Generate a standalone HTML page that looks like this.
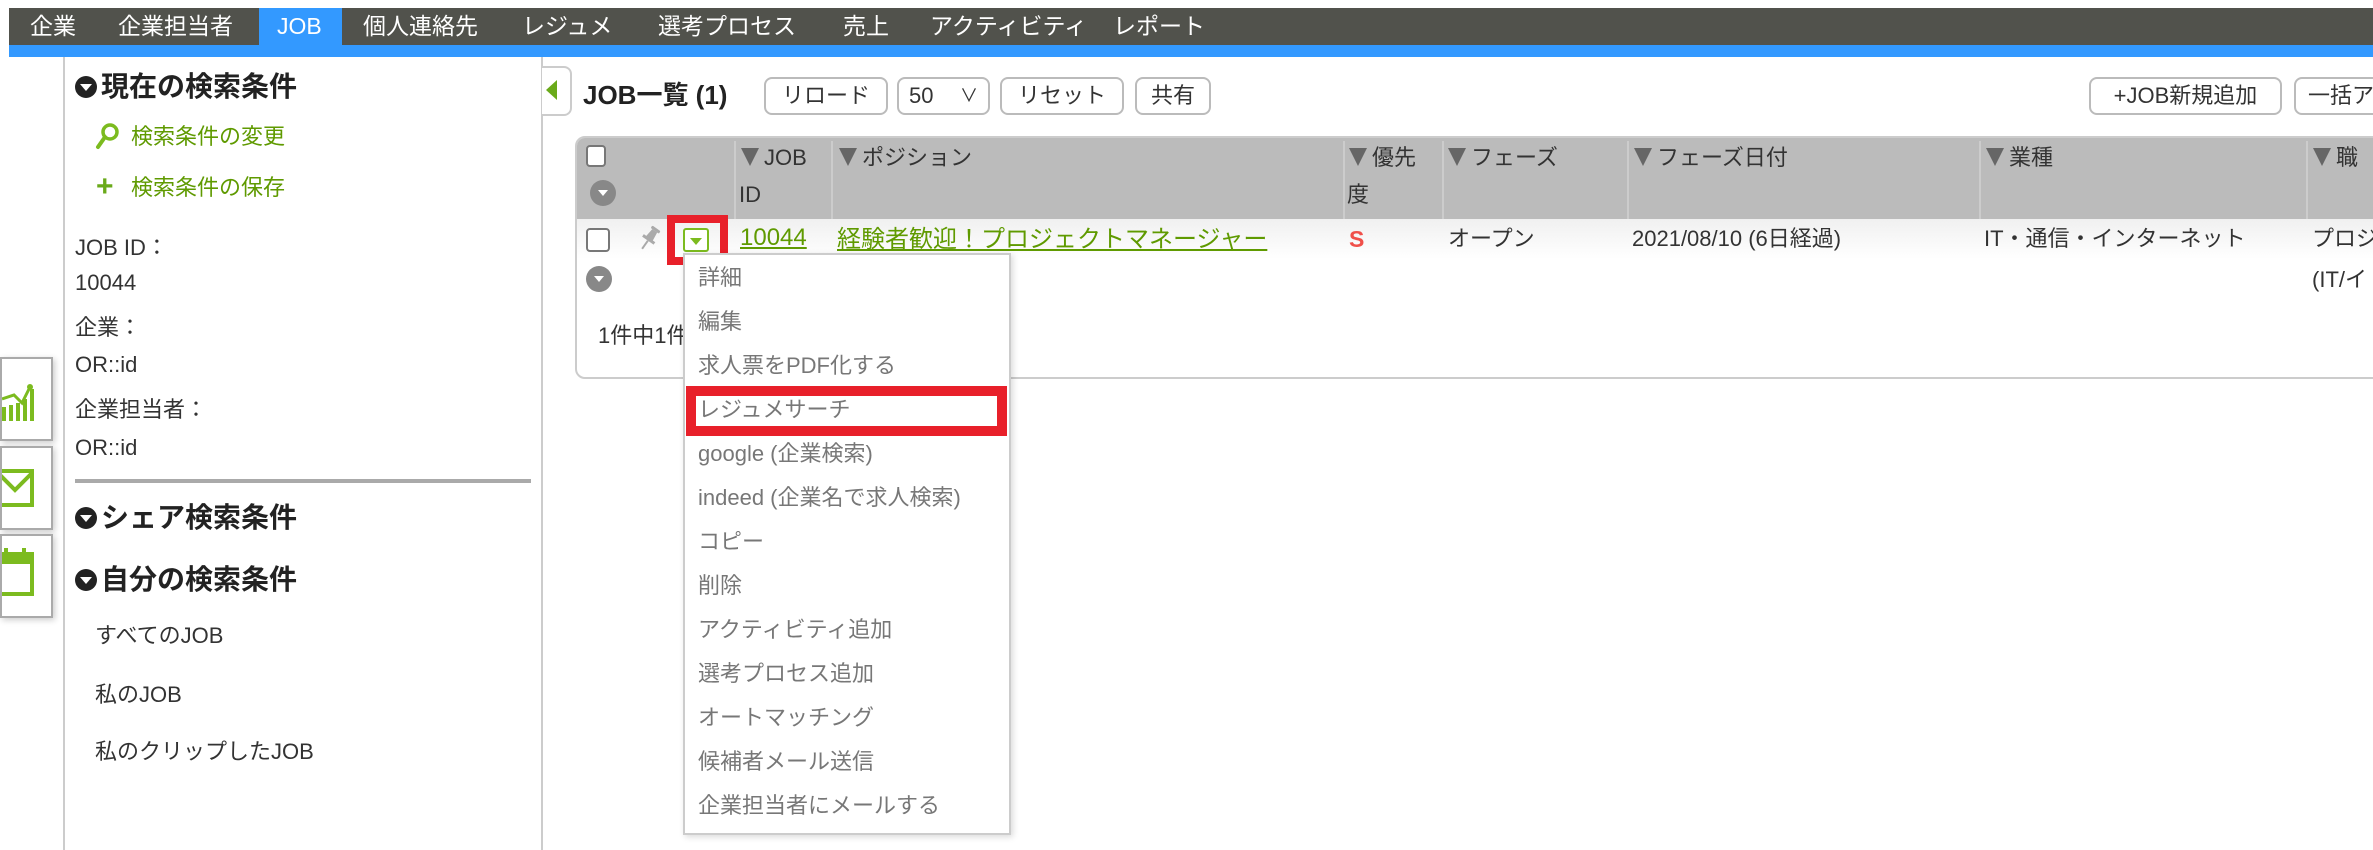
<!DOCTYPE html>
<html><head><meta charset="utf-8"><style>
*{margin:0;padding:0;box-sizing:border-box}
body{width:2373px;height:850px;overflow:hidden;background:#fff;font-family:"Liberation Sans","Noto Sans CJK JP",sans-serif;color:#333;position:relative}
.a{position:absolute;white-space:nowrap;line-height:30px}
.nav{position:absolute;left:9px;top:8px;width:2364px;height:37px;background:#51524c}
.blue{position:absolute;left:9px;top:45px;width:2364px;height:12px;background:#3399ff}
.ni{position:absolute;top:11px;color:#fff;font-size:23px;line-height:30px;white-space:nowrap}
.h{font-weight:bold;font-size:28px;color:#222}
.circ{display:inline-block;width:22px;height:22px;border-radius:50%;background:#222;position:relative;vertical-align:-2px;margin-right:4px}
.circ:after{content:"";position:absolute;left:5px;top:8px;border-left:6px solid transparent;border-right:6px solid transparent;border-top:7px solid #fff}
.g{color:#5f9a00;font-size:22px}
.t{font-size:22px;color:#333}
.btn{position:absolute;top:77px;height:38px;border:2px solid #bbb;border-radius:8px;font-size:22px;line-height:34px;text-align:center;color:#333;background:#fff}
.th{position:absolute;top:138px;height:81px;background:#bbb}
.sep{position:absolute;top:141px;width:2px;height:78px;background:#ccc}
.hd{font-size:22px;color:#333}
.tri{display:inline-block;width:0;height:0;border-left:9px solid transparent;border-right:9px solid transparent;border-top:18px solid #666;margin-right:5px;vertical-align:-1px}
.mi{position:absolute;left:698px;font-size:22px;color:#777;line-height:30px}
.sb{position:absolute;left:0;width:53px;height:84px;border:2px solid #aaa;background:#fff;box-shadow:2px 2px 6px rgba(0,0,0,.2)}
.gc{position:absolute;width:26px;height:26px;border-radius:50%;background:#888}
.gc:after{content:"";position:absolute;left:8px;top:10px;border-left:5px solid transparent;border-right:5px solid transparent;border-top:6px solid #fff}
</style></head><body>
<div class="nav"></div>
<div style="position:absolute;left:259px;top:8px;width:83px;height:37px;background:#3399ff"></div>
<div class="blue"></div>
<div class="ni" style="left:30px">企業</div>
<div class="ni" style="left:118px">企業担当者</div>
<div class="ni" style="left:277px">JOB</div>
<div class="ni" style="left:363px">個人連絡先</div>
<div class="ni" style="left:522px">レジュメ</div>
<div class="ni" style="left:658px">選考プロセス</div>
<div class="ni" style="left:843px">売上</div>
<div class="ni" style="left:930px">アクティビティ</div>
<div class="ni" style="left:1113px">レポート</div>

<!-- sidebar -->
<div style="position:absolute;left:63px;top:57px;width:2px;height:793px;background:#ccc"></div>
<div style="position:absolute;left:541px;top:57px;width:2px;height:793px;background:#ccc"></div>
<div class="a h" style="left:75px;top:72px"><span class="circ"></span>現在の検索条件</div>
<svg style="position:absolute;left:95px;top:122px" width="26" height="28" viewBox="0 0 26 28"><circle cx="15" cy="10" r="7" fill="none" stroke="#7cbb1f" stroke-width="3.5"/><line x1="10" y1="15" x2="3" y2="25" stroke="#7cbb1f" stroke-width="4" stroke-linecap="round"/></svg>
<div class="a g" style="left:131px;top:122px">検索条件の変更</div>
<div class="a g" style="left:96px;top:172px"><b style="font-size:30px;color:#6aaa1a">+</b></div>
<div class="a g" style="left:131px;top:173px">検索条件の保存</div>
<div class="a t" style="left:75px;top:233px">JOB ID：</div>
<div class="a t" style="left:75px;top:268px">10044</div>
<div class="a t" style="left:75px;top:313px">企業：</div>
<div class="a t" style="left:75px;top:350px">OR::id</div>
<div class="a t" style="left:75px;top:395px">企業担当者：</div>
<div class="a t" style="left:75px;top:433px">OR::id</div>
<div style="position:absolute;left:75px;top:479px;width:456px;height:4px;background:#aaa"></div>
<div class="a h" style="left:75px;top:503px"><span class="circ"></span>シェア検索条件</div>
<div class="a h" style="left:75px;top:565px"><span class="circ"></span>自分の検索条件</div>
<div class="a t" style="left:95px;top:621px">すべてのJOB</div>
<div class="a t" style="left:95px;top:680px">私のJOB</div>
<div class="a t" style="left:95px;top:737px">私のクリップしたJOB</div>

<!-- floating icons -->
<div class="sb" style="top:357px"><svg width="50" height="80" viewBox="0 0 50 80"><g fill="#7cbb1f"><rect x="0" y="48" width="4" height="14"/><rect x="7" y="46" width="4" height="16"/><rect x="14" y="44" width="4" height="18"/><rect x="21" y="40" width="4" height="22"/><rect x="28" y="30" width="4" height="32"/></g><polyline points="0,40 12,36 20,44 28,28" fill="none" stroke="#7cbb1f" stroke-width="3"/><circle cx="28" cy="28" r="3" fill="#7cbb1f"/></svg></div>
<div class="sb" style="top:446px"><svg width="50" height="80" viewBox="0 0 50 80"><rect x="-4" y="23" width="34" height="34" fill="none" stroke="#7cbb1f" stroke-width="4"/><polyline points="-4,25 13,42 30,25" fill="none" stroke="#7cbb1f" stroke-width="4"/></svg></div>
<div class="sb" style="top:534px"><svg width="50" height="80" viewBox="0 0 50 80"><rect x="-4" y="18" width="34" height="40" fill="none" stroke="#7cbb1f" stroke-width="4"/><rect x="-4" y="18" width="34" height="10" fill="#7cbb1f"/><rect x="2" y="12" width="4" height="9" fill="#7cbb1f"/><rect x="20" y="12" width="4" height="9" fill="#7cbb1f"/></svg></div>

<!-- collapse tab -->
<div style="position:absolute;left:542px;top:66px;width:30px;height:50px;border:2px solid #ccc;border-left:none;border-radius:0 8px 8px 0;background:#fff"></div>
<div style="position:absolute;left:546px;top:80px;border-top:10px solid transparent;border-bottom:10px solid transparent;border-right:11px solid #6aaa1a"></div>

<!-- toolbar -->
<div class="a" style="left:583px;top:80px;font-size:26px;font-weight:bold;color:#222">JOB一覧 (1)</div>
<div class="btn" style="left:764px;width:124px">リロード</div>
<div class="btn" style="left:897px;width:93px;text-align:left;padding-left:10px">50 <span style="position:absolute;right:10px;top:0;font-size:18px">∨</span></div>
<div class="btn" style="left:1000px;width:124px">リセット</div>
<div class="btn" style="left:1135px;width:76px">共有</div>
<div class="btn" style="left:2089px;width:193px">+JOB新規追加</div>
<div class="btn" style="left:2294px;width:120px;text-align:left;padding-left:12px">一括ア</div>

<!-- table -->
<div style="position:absolute;left:575px;top:136px;width:1820px;height:243px;border:2px solid #ccc;border-radius:10px 0 0 10px;background:#fff"></div>
<div class="th" style="left:577px;width:1800px;border-radius:8px 0 0 0"></div>
<div style="position:absolute;left:577px;top:219px;width:1800px;height:40px;background:linear-gradient(#f0f0f0,#fff)"></div>
<div class="sep" style="left:734px"></div><div class="sep" style="left:831px"></div><div class="sep" style="left:1343px"></div><div class="sep" style="left:1442px"></div><div class="sep" style="left:1627px"></div><div class="sep" style="left:1979px"></div><div class="sep" style="left:2306px"></div>
<div style="position:absolute;left:586px;top:145px;width:20px;height:22px;border:2px solid #777;border-radius:4px;background:#fff"></div>
<div class="gc" style="left:590px;top:180px"></div>
<div class="a hd" style="left:741px;top:143px"><span class="tri"></span>JOB</div>
<div class="a hd" style="left:739px;top:180px">ID</div>
<div class="a hd" style="left:839px;top:143px"><span class="tri"></span>ポジション</div>
<div class="a hd" style="left:1349px;top:143px"><span class="tri"></span>優先</div>
<div class="a hd" style="left:1347px;top:180px">度</div>
<div class="a hd" style="left:1448px;top:143px"><span class="tri"></span>フェーズ</div>
<div class="a hd" style="left:1634px;top:143px"><span class="tri"></span>フェーズ日付</div>
<div class="a hd" style="left:1986px;top:143px"><span class="tri"></span>業種</div>
<div class="a hd" style="left:2313px;top:143px"><span class="tri"></span>職</div>

<!-- row -->
<div style="position:absolute;left:586px;top:228px;width:24px;height:24px;border:2px solid #777;border-radius:4px;background:#fff"></div>
<svg style="position:absolute;left:636px;top:224px" width="26" height="30" viewBox="0 0 26 30"><g fill="#aaa" transform="rotate(35 13 15)"><rect x="8" y="2" width="10" height="3" rx="1"/><path d="M10 5h6l1 9h3v3H6v-3h3z"/><rect x="12" y="17" width="2" height="10"/></g></svg>
<div class="gc" style="left:586px;top:266px"></div>
<div style="position:absolute;left:667px;top:215px;width:61px;height:50px;border:8px solid #e8202a"></div>
<div style="position:absolute;left:683px;top:228px;width:26px;height:24px;border:2px solid #7cbb1f;border-radius:3px;background:#fff"></div>
<div style="position:absolute;left:690px;top:238px;border-left:6px solid transparent;border-right:6px solid transparent;border-top:7px solid #7cbb1f"></div>
<div class="a" style="left:740px;top:223px;font-size:24px;color:#5f9a00;text-decoration:underline">10044</div>
<div class="a" style="left:837px;top:225px;font-size:24px;color:#5f9a00;text-decoration:underline">経験者歓迎！プロジェクトマネージャー</div>
<div class="a" style="left:1349px;top:224px;font-size:23px;color:#f0504a;font-weight:bold">S</div>
<div class="a t" style="left:1448px;top:224px">オープン</div>
<div class="a t" style="left:1632px;top:224px">2021/08/10 (6日経過)</div>
<div class="a t" style="left:1984px;top:224px">IT・通信・インターネット</div>
<div class="a t" style="left:2312px;top:224px">プロジ</div>
<div class="a t" style="left:2312px;top:265px">(IT/イ</div>
<div class="a t" style="left:598px;top:321px">1件中1件</div>

<!-- dropdown menu -->
<div style="position:absolute;left:683px;top:253px;width:328px;height:582px;background:#fff;border:2px solid #ccc;box-shadow:2px 2px 6px rgba(0,0,0,.15)"></div>
<div class="mi" style="top:263px">詳細</div>
<div class="mi" style="top:307px">編集</div>
<div class="mi" style="top:351px">求人票をPDF化する</div>
<div style="position:absolute;left:686px;top:386px;width:321px;height:50px;border:10px solid #e8202a"></div>
<div class="mi" style="top:395px">レジュメサーチ</div>
<div class="mi" style="top:439px">google (企業検索)</div>
<div class="mi" style="top:483px">indeed (企業名で求人検索)</div>
<div class="mi" style="top:527px">コピー</div>
<div class="mi" style="top:571px">削除</div>
<div class="mi" style="top:615px">アクティビティ追加</div>
<div class="mi" style="top:659px">選考プロセス追加</div>
<div class="mi" style="top:703px">オートマッチング</div>
<div class="mi" style="top:747px">候補者メール送信</div>
<div class="mi" style="top:791px">企業担当者にメールする</div>
</body></html>
